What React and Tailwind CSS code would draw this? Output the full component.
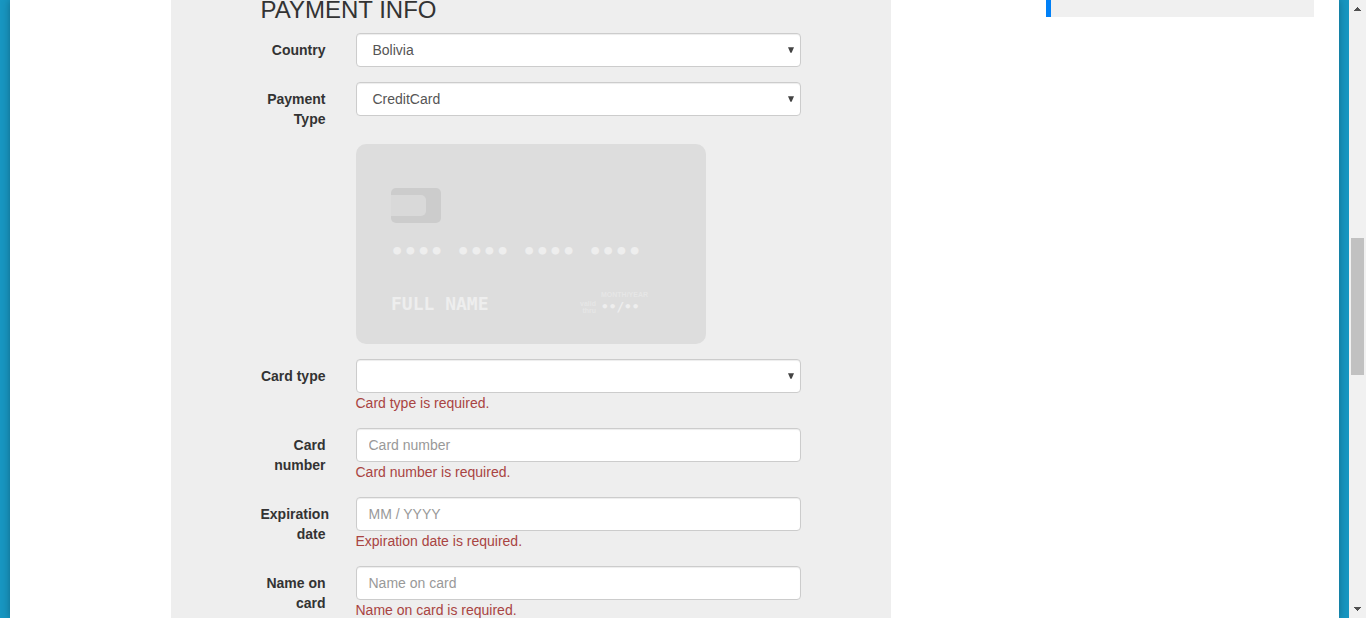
import React from "react";

const control =
  "flex h-[34px] w-full items-center justify-between rounded-[4px] border border-[#ccc] bg-white text-[14px] shadow-[inset_0_1px_1px_rgba(0,0,0,0.075)] outline-none";

function Row({ label, error, className, children }) {
  return (
    <div className={`flex shrink-0 ${className}`}>
      <div className="-ml-[0.5px] w-[65px] shrink-0 pt-[7px] text-right font-bold text-[#333]">{label}</div>
      <div className="ml-[30.5px] w-[445px]">
        {children}
        {error && <p className="-ml-[0.5px] text-[#a94442]">{error}</p>}
      </div>
    </div>
  );
}

function Select({ value }) {
  return (
    <button className={`${control} pr-[6px] pl-[15.5px] text-[#555]`}>
      <span>{value}</span>
      <svg width="6" height="6" viewBox="0 0 6 6" fill="#444">
        <path d="M0 .3h6L3.6 5.8H2.4z" />
      </svg>
    </button>
  );
}

function Input({ placeholder }) {
  return <input placeholder={placeholder} className={`${control} pr-3 pl-[11.5px] text-[#555] placeholder:text-[#999]`} />;
}

function Card() {
  return (
    <div className="mt-[15px] ml-[95px] flex h-[200px] w-[350px] shrink-0 flex-col rounded-[10px] bg-[#ddd] pt-[44px] pl-[35px]">
      <div className="h-[35px] w-[50px] shrink-0 rounded-[5px] bg-[#ccc] pt-[7px]">
        <div className="h-[21px] w-[35px] rounded-r-[5px] bg-[#d9d9d9]" />
      </div>
      <div className="mt-[15px] -ml-[0.5px] h-[26px] font-['DejaVu_Sans_Mono',monospace] text-[22px] leading-[27px] font-bold tracking-[-0.05px] whitespace-pre text-[#eee]">
        •••• •••• •••• ••••
      </div>
      <div className="mt-[24px] flex h-[36px]">
        <div className="w-[188px] pt-[6px] font-['DejaVu_Sans_Mono',monospace] text-[18px] leading-[20px] font-bold text-[#eee]">
          FULL NAME
        </div>
        <div className="w-[17px] pt-[12px] text-right text-[7px] leading-[7px] font-bold text-[#e6e6e6]">
          valid
          <br />
          thru
        </div>
        <div className="ml-[5px]">
          <div className="h-[11px] text-[7px] leading-[13px] font-bold text-[#e6e6e6]">MONTH/YEAR</div>
          <div className="font-['DejaVu_Sans_Mono',monospace] text-[12.8px] leading-[16px] font-bold text-[#eee]">••/••</div>
        </div>
      </div>
    </div>
  );
}

export default function App() {
  return (
    <div className="flex h-[618px] w-full overflow-hidden bg-[#1896c1] pl-[10px] font-['Liberation_Sans',Arial,sans-serif] text-[14px] leading-[20px]">
      <main className="flex w-[1329px] shrink-0 bg-white pl-[161px] shadow-[0_0_8px_rgba(0,0,0,0.3)]">
        <form className="flex h-[618px] w-[720px] shrink-0 flex-col overflow-hidden bg-[#eee] pl-[90px]">
          <h2 className="-ml-[0.5px] h-[33px] shrink-0 text-[24px] leading-[20px] text-[#333]">PAYMENT INFO</h2>
          <Row label="Country" className="h-[49px]">
            <Select value="Bolivia" />
          </Row>
          <Row label="Payment Type" className="h-[47px]">
            <Select value="CreditCard" />
          </Row>
          <Card />
          <Row label="Card type" error="Card type is required." className="mt-[15px] h-[69px]">
            <Select value="" />
          </Row>
          <Row label="Card number" error="Card number is required." className="h-[69px]">
            <Input placeholder="Card number" />
          </Row>
          <Row label="Expiration date" error="Expiration date is required." className="h-[69px]">
            <Input placeholder="MM / YYYY" />
          </Row>
          <Row label="Name on card" error="Name on card is required." className="h-[69px]">
            <Input placeholder="Name on card" />
          </Row>
        </form>
        <aside className="ml-[155px] h-[17px] w-[268px] border-l-[5px] border-[#0080f7] bg-[#f0f0f0]" />
      </main>
      <div className="ml-[10px] flex w-[17px] shrink-0 flex-col items-center bg-[#f1f1f1] pr-[1px] pl-[1px]">
        <svg width="7" height="4" viewBox="0 0 7 4" className="mt-[7px] shrink-0" fill="#505050" shapeRendering="crispEdges">
          <path d="M3 0h1v1h1v1h1v1h1v1H0V3h1V2h1V1h1z" />
        </svg>
        <div className="mt-[227px] h-[137px] w-[13px] shrink-0 bg-[#c1c1c1]" />
        <svg width="7" height="4" viewBox="0 0 7 4" className="mt-[232px] shrink-0" fill="#505050" shapeRendering="crispEdges">
          <path d="M0 0h7v1H6v1H5v1H4v1H3V3H2V2H1V1H0z" />
        </svg>
      </div>
    </div>
  );
}
